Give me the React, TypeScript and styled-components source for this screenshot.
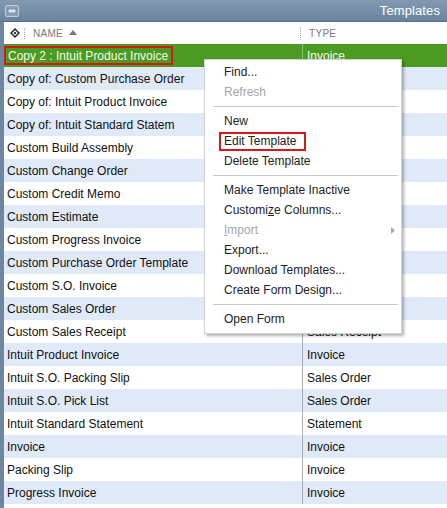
import * as React from "react";
import styled, { createGlobalStyle } from "styled-components";

const GlobalStyle = createGlobalStyle`
  html, body {
    margin: 0;
    padding: 0;
    background: #ffffff;
  }
  body {
    font-family: "Liberation Sans", Arial, sans-serif;
    overflow: hidden;
  }
`;

type Template = { name: string; type: string };

const templates: Template[] = [
  { name: "Copy 2 : Intuit Product Invoice", type: "Invoice" },
  { name: "Copy of: Custom Purchase Order", type: "Purchase Order" },
  { name: "Copy of: Intuit Product Invoice", type: "Invoice" },
  { name: "Copy of: Intuit Standard Statem", type: "Statement" },
  { name: "Custom Build Assembly", type: "Build Assembly" },
  { name: "Custom Change Order", type: "Estimate" },
  { name: "Custom Credit Memo", type: "Credit Memo" },
  { name: "Custom Estimate", type: "Estimate" },
  { name: "Custom Progress Invoice", type: "Invoice" },
  { name: "Custom Purchase Order Template", type: "Purchase Order" },
  { name: "Custom S.O. Invoice", type: "Invoice" },
  { name: "Custom Sales Order", type: "Sales Order" },
  { name: "Custom Sales Receipt", type: "Sales Receipt" },
  { name: "Intuit Product Invoice", type: "Invoice" },
  { name: "Intuit S.O. Packing Slip", type: "Sales Order" },
  { name: "Intuit S.O. Pick List", type: "Sales Order" },
  { name: "Intuit Standard Statement", type: "Statement" },
  { name: "Invoice", type: "Invoice" },
  { name: "Packing Slip", type: "Invoice" },
  { name: "Progress Invoice", type: "Invoice" },
];

type MenuEntry =
  | { kind: "sep" }
  | { kind: "item"; label: React.ReactNode; disabled?: boolean; boxed?: boolean; submenu?: boolean };

const menu: MenuEntry[] = [
  { kind: "item", label: "Find..." },
  { kind: "item", label: "Refresh", disabled: true },
  { kind: "sep" },
  { kind: "item", label: "New" },
  { kind: "item", label: "Edit Template", boxed: true },
  { kind: "item", label: "Delete Template" },
  { kind: "sep" },
  { kind: "item", label: "Make Template Inactive" },
  {
    kind: "item",
    label: (
      <>
        Customi<u>z</u>e Columns...
      </>
    ),
  },
  {
    kind: "item",
    label: (
      <>
        <u>I</u>mport
      </>
    ),
    disabled: true,
    submenu: true,
  },
  { kind: "item", label: "Export..." },
  { kind: "item", label: "Download Templates..." },
  { kind: "item", label: "Create Form Design..." },
  { kind: "sep" },
  { kind: "item", label: "Open Form" },
];

export default function App() {
  return (
    <>
      <GlobalStyle />
      <Window>
        <TitleBar>
          <WindowIcon>
            <svg width="14" height="12" viewBox="0 0 14 12">
              <rect x="0.5" y="0.5" width="13" height="11" rx="1" fill="#8fa4ba" stroke="#c9d4e0" />
              <rect x="3" y="4" width="8" height="4" fill="#e8eef4" stroke="#6d84a0" strokeWidth="0.8" />
            </svg>
          </WindowIcon>
          <Title>Templates</Title>
        </TitleBar>
        <Body>
          <HeaderRow>
            <HeaderIcon>
              <svg width="10" height="10" viewBox="0 0 10 10">
                <path d="M5 0 L10 5 L5 10 L0 5 Z" fill="#222" />
                <path d="M5 2 L8 5 L5 8 L2 5 Z" fill="#fff" />
                <path d="M5 3.5 L6.5 5 L5 6.5 L3.5 5 Z" fill="#222" />
              </svg>
            </HeaderIcon>
            <HeaderCell $width={276}>
              NAME
              <SortArrow>
                <svg width="8" height="5" viewBox="0 0 8 5">
                  <path d="M0 5 L4 0 L8 5 Z" fill="#777" />
                </svg>
              </SortArrow>
            </HeaderCell>
            <HeaderCell>TYPE</HeaderCell>
          </HeaderRow>
          {templates.map((t, i) => (
            <Row key={t.name} $index={i} $selected={i === 0}>
              <NameCell>
                {i === 0 ? (
                  <Boxed $pad="0 3px 0 2px" $shift={3}>
                    {t.name}
                  </Boxed>
                ) : (
                  t.name
                )}
              </NameCell>
              <TypeCell $selected={i === 0}>{t.type}</TypeCell>
            </Row>
          ))}
        </Body>
        <Menu>
          {menu.map((m, i) =>
            m.kind === "sep" ? (
              <Separator key={i} />
            ) : (
              <MenuItem key={i} $disabled={m.disabled}>
                {m.boxed ? (
                  <Boxed $pad="0 7px 0 3px" $shift={5}>
                    {m.label}
                  </Boxed>
                ) : (
                  m.label
                )}
                {m.submenu && (
                  <SubArrow>
                    <svg width="4" height="7" viewBox="0 0 4 7">
                      <path d="M0 0 L4 3.5 L0 7 Z" fill="#aaa" />
                    </svg>
                  </SubArrow>
                )}
              </MenuItem>
            )
          )}
        </Menu>
      </Window>
    </>
  );
}

const Window = styled.div`
  position: relative;
  width: 447px;
  height: 508px;
  overflow: hidden;
  background: #ffffff;
  display: flex;
  flex-direction: column;
`;

const TitleBar = styled.div`
  height: 21px;
  flex-shrink: 0;
  display: flex;
  align-items: center;
  justify-content: space-between;
  padding: 0 7px 0 5px;
  background: linear-gradient(#8299b1, #6a839e);
  border-bottom: 1px solid #56708c;
`;

const WindowIcon = styled.div`
  display: flex;
  align-items: center;
  opacity: 0.9;
`;

const Title = styled.div`
  color: #ffffff;
  font-size: 13px;
  letter-spacing: 0.1px;
`;

const Body = styled.div`
  flex: 1;
  border-left: 4px solid #6d87a3;
  display: flex;
  flex-direction: column;
`;

const HeaderRow = styled.div`
  height: 22px;
  display: flex;
  align-items: center;
  background: #ffffff;
  color: #777;
  font-size: 10px;
  letter-spacing: 0.3px;
`;

const HeaderIcon = styled.div`
  width: 18px;
  display: flex;
  justify-content: center;
  align-items: center;
  padding-left: 2px;
  border-right: 1px dotted #aaa;
  height: 11px;
`;

const HeaderCell = styled.div<{ $width?: number }>`
  display: flex;
  align-items: center;
  gap: 6px;
  padding-left: 8px;
  ${(p) => (p.$width ? `width: ${p.$width}px; border-right: 1px dotted #aaa;` : "flex: 1;")}
  height: 13px;
  box-sizing: border-box;
`;

const SortArrow = styled.span`
  display: inline-flex;
  align-items: center;
  margin-top: -1px;
`;

const Row = styled.div<{ $index: number; $selected: boolean }>`
  height: 23px;
  display: flex;
  align-items: stretch;
  font-size: 12px;
  color: ${(p) => (p.$selected ? "#f6fae8" : "#111")};
  background: ${(p) =>
    p.$selected ? "#4b9a22" : p.$index % 2 === 1 ? "#dfe9f8" : "#ffffff"};
`;

const NameCell = styled.div`
  width: 298px;
  display: flex;
  align-items: center;
  padding-left: 3px;
  box-sizing: border-box;
  white-space: nowrap;
`;

const TypeCell = styled.div<{ $selected: boolean }>`
  flex: 1;
  display: flex;
  align-items: center;
  padding-left: 4px;
  border-left: 1px solid ${(p) => (p.$selected ? "#8cc070" : "#a8adb5")};
  white-space: nowrap;
`;

const Boxed = styled.span<{ $pad: string; $shift: number }>`
  display: inline-flex;
  align-items: center;
  height: 19px;
  padding: ${(p) => p.$pad};
  margin-left: -${(p) => p.$shift}px;
  border: 2px solid #d8161b;
  box-sizing: border-box;
`;

const Menu = styled.div`
  position: absolute;
  left: 204px;
  top: 59px;
  width: 196px;
  padding: 2px 0 4px;
  background: #ffffff;
  border: 1px solid #cfd3d8;
  box-shadow: 2px 2px 3px rgba(0, 0, 0, 0.3);
  font-size: 12px;
  display: flex;
  flex-direction: column;
`;

const MenuItem = styled.div<{ $disabled?: boolean }>`
  position: relative;
  height: 20px;
  display: flex;
  align-items: center;
  padding-left: 19px;
  color: ${(p) => (p.$disabled ? "#a6a6a6" : "#222")};
  white-space: nowrap;
`;

const SubArrow = styled.span`
  position: absolute;
  right: 6px;
  top: 7px;
  display: flex;
`;

const Separator = styled.div`
  height: 1px;
  margin: 4px 3px 4px 8px;
  background: #c8c8c8;
`;
